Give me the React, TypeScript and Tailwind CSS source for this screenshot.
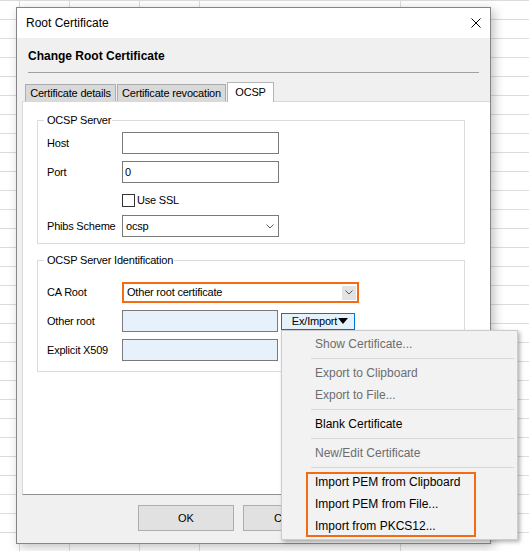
import type { ReactNode } from "react";

type MenuEntry = { label: string; disabled?: boolean } | "sep";

const menuTop: MenuEntry[] = [
  { label: "Show Certificate...", disabled: true },
  "sep",
  { label: "Export to Clipboard", disabled: true },
  { label: "Export to File...", disabled: true },
  "sep",
  { label: "Blank Certificate" },
  "sep",
  { label: "New/Edit Certificate", disabled: true },
  "sep",
];

const importItems = ["Import PEM from Clipboard", "Import PEM from File...", "Import from PKCS12..."];

function Chevron() {
  return (
    <svg width="8" height="5" viewBox="0 0 8 5">
      <path d="M0.5 0.5 L4 4 L7.5 0.5" fill="none" stroke="#5a5a5a" strokeWidth="1" />
    </svg>
  );
}

function Row({ label, className, children }: { label?: string; className: string; children: ReactNode }) {
  return (
    <div className={`flex items-center ${className}`}>
      <span className="w-[75px] shrink-0">{label}</span>
      {children}
    </div>
  );
}

function MenuItem({ label, disabled }: { label: string; disabled?: boolean }) {
  return (
    <div className={`flex h-[22px] items-center pl-[33px] ${disabled ? "text-[#6d6d6d]" : "text-black"}`}>{label}</div>
  );
}

function Separator() {
  return (
    <div className="flex h-[7px] items-center">
      <div className="ml-[29px] mr-[3px] h-px flex-1 bg-[#d7d7d7]" />
    </div>
  );
}

// dropdown shown under the Ex/Import button
function ImportMenu() {
  return (
    <div className="absolute left-0 top-[17px] z-20 w-[237px] border border-[#cccccc] bg-[#f2f2f2] py-[2px] text-[12px] tracking-normal shadow-[2px_2px_4px_rgba(0,0,0,0.3)]">
      {menuTop.map((entry, i) =>
        entry === "sep" ? <Separator key={i} /> : <MenuItem key={i} label={entry.label} disabled={entry.disabled} />
      )}
      <div className="relative">
        {importItems.map((label) => (
          <MenuItem key={label} label={label} />
        ))}
        <div className="pointer-events-none absolute left-[24px] top-[1px] h-[65px] w-[170px] border-2 border-[#f36b12]" />
      </div>
    </div>
  );
}

export default function App() {
  return (
    <div className="h-[551px] w-[529px] overflow-hidden bg-white pl-[16px] pt-[7px] font-['Liberation_Sans',Arial,sans-serif] text-black [background-image:linear-gradient(to_right,transparent_19px,#dcdcdc_19px,#dcdcdc_20px,transparent_20px,transparent_69px,#dcdcdc_69px,#dcdcdc_70px,transparent_70px,transparent_139px,#dcdcdc_139px,#dcdcdc_140px,transparent_140px,transparent_199px,#dcdcdc_199px,#dcdcdc_200px,transparent_200px,transparent_400px,#dcdcdc_400px,#dcdcdc_401px,transparent_401px),linear-gradient(to_bottom,#dcdcdc_1px,transparent_1px)] [background-size:100%_100%,100%_19px]">
      <div className="flex h-[537px] w-[475px] flex-col border border-[#858585] bg-[#f0f0f0] shadow-[3px_3px_10px_rgba(0,0,0,0.25)]">
        {/* title bar */}
        <div className="flex h-[30px] items-center justify-between bg-white pl-[9px] pr-[9px] text-[12px]">
          <span>Root Certificate</span>
          <svg width="10" height="10" viewBox="0 0 10 10">
            <path d="M0.5 0.5 L9.5 9.5 M9.5 0.5 L0.5 9.5" stroke="#000" strokeWidth="1" />
          </svg>
        </div>

        <div className="ml-[11px] mt-[11px] h-[14px] text-[12px] font-bold leading-[14px]">Change Root Certificate</div>
        <div className="mx-[11px] mt-[9px] h-px bg-[#a0a0a0]" />

        {/* tabs */}
        <div className="ml-[8px] mt-[9px] flex h-[19px] items-end text-[11px] tracking-[-0.2px]">
          <div className="flex h-[17px] w-[91px] items-center justify-center border border-b-0 border-[#acacac] bg-[#d9d9d9]">
            Certificate details
          </div>
          <div className="ml-px flex h-[17px] w-[109px] items-center justify-center border border-b-0 border-[#acacac] bg-[#d9d9d9]">
            Certificate revocation
          </div>
          <div className="relative z-10 -mb-px ml-px flex h-[20px] w-[47px] items-center justify-center border border-b-0 border-[#b5b5b5] bg-white">
            OCSP
          </div>
        </div>

        {/* tab page */}
        <div className="ml-[5px] h-[394px] border-l border-t border-b border-l-[#d9d9d9] border-t-[#d9d9d9] border-b-[#8f8f8f] bg-white pl-[14px] text-[11px] tracking-[-0.2px]">
          <fieldset className="mt-[11px] w-[428px] border border-[#dcdcdc] pb-[6px] pl-[9px]">
            <legend className="-ml-[3px] pl-[3px] pr-[1px] leading-[14px]">OCSP Server</legend>
            <Row label="Host" className="mt-[5px] h-[22px]">
              <div className="h-[22px] w-[157px] border border-[#7a7a7a] bg-white" />
            </Row>
            <Row label="Port" className="mt-[7px] h-[22px]">
              <div className="flex h-[22px] w-[157px] items-center border border-[#7a7a7a] bg-white pl-[2px]">0</div>
            </Row>
            <Row className="mt-[10px] h-[14px]">
              <div className="h-[13px] w-[13px] border border-[#333333] bg-white" />
              <span className="ml-[2px]">Use SSL</span>
            </Row>
            <Row label="Phibs Scheme" className="mt-[8px] h-[22px]">
              <div className="flex h-[22px] w-[157px] items-center justify-between border border-[#7a7a7a] bg-white pl-[3px] pr-[4px]">
                <span>ocsp</span>
                <Chevron />
              </div>
            </Row>
          </fieldset>

          <fieldset className="mt-[9px] w-[428px] border border-[#dcdcdc] pb-[10px] pl-[9px]">
            <legend className="-ml-[3px] pl-[3px] pr-[1px] leading-[14px]">OCSP Server Identification</legend>
            <Row label="CA Root" className="mt-[15px] h-[21px]">
              <div className="flex h-[21px] w-[237px] items-center justify-between border-2 border-[#f36b12] bg-white pl-[3px] pr-[1px]">
                <span>Other root certificate</span>
                <div className="flex h-[14px] w-[14px] items-center justify-center bg-[#e3e3e3]">
                  <Chevron />
                </div>
              </div>
            </Row>
            <Row label="Other root" className="mt-[7px] h-[22px]">
              <div className="h-[22px] w-[156px] border border-[#7a7a7a] bg-[#e6f1fb]" />
              <div className="relative ml-[3px]">
                <div className="flex h-[17px] w-[74px] items-center justify-center gap-[1px] border border-[#0078d7] bg-[#e5f1fb] pl-[4px]">
                  <span>Ex/Import</span>
                  <svg width="10" height="6" viewBox="0 0 10 6">
                    <path d="M0 0 H10 L5 6 Z" fill="#000" />
                  </svg>
                </div>
                <ImportMenu />
              </div>
            </Row>
            <Row label="Explicit X509" className="mt-[7px] h-[22px]">
              <div className="h-[22px] w-[156px] border border-[#7a7a7a] bg-[#e6f1fb]" />
            </Row>
          </fieldset>
        </div>

        {/* dialog buttons */}
        <div className="flex gap-[9px] pl-[121px] pt-[10px] text-[11px]">
          <div className="flex h-[26px] w-[96px] items-center justify-center border border-[#adadad] bg-[#e1e1e1]">OK</div>
          <div className="flex h-[26px] w-[96px] items-center justify-center border border-[#adadad] bg-[#e1e1e1]">Cancel</div>
        </div>
      </div>
    </div>
  );
}
